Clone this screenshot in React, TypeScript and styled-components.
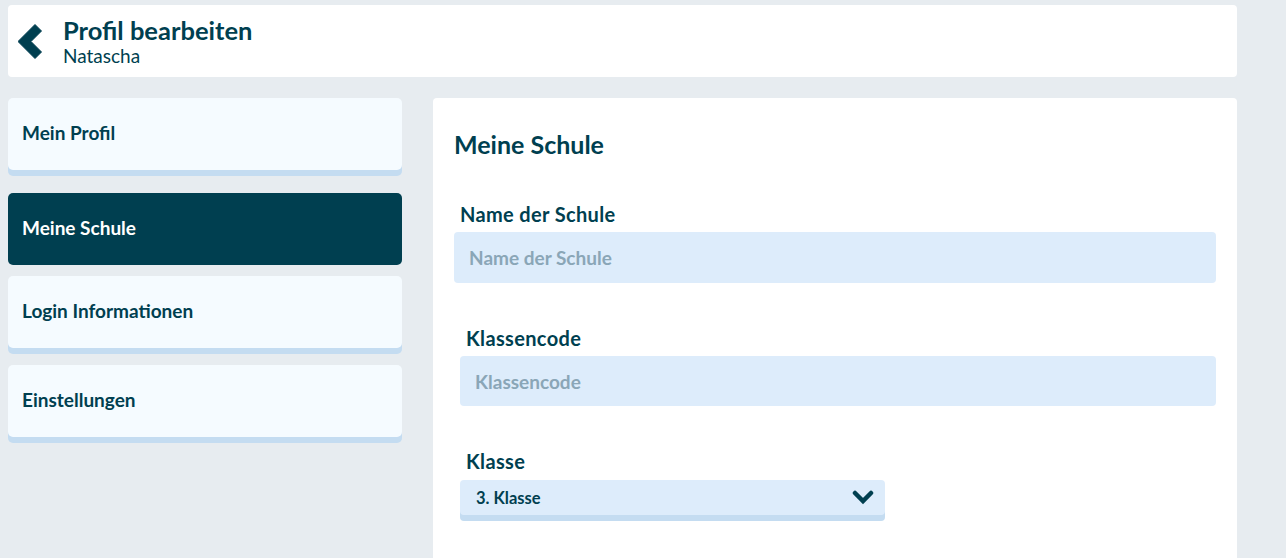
import styled, { createGlobalStyle } from "styled-components";

const GlobalStyle = createGlobalStyle`
  html, body {
    margin: 0;
    padding: 0;
    background: #e7ecf0;
    font-family: Lato, "Open Sans", sans-serif;
    color: #003f50;
  }
  * {
    box-sizing: border-box;
  }
`;

const Page = styled.div`
  width: 1229px;
  margin: 5px 0 0 8px;
  height: 553px;
  overflow: hidden;
`;

const Header = styled.header`
  height: 72px;
  background: #ffffff;
  border-radius: 4px;
  display: flex;
  align-items: center;
  padding-left: 10px;
`;

const BackButton = styled.button`
  border: 0;
  background: none;
  padding: 0;
  width: 45px;
  height: 40px;
  display: flex;
  align-items: center;
  cursor: pointer;
`;

const TitleBlock = styled.div`
  display: flex;
  flex-direction: column;
`;

const Title = styled.h1`
  margin: 0;
  font-size: 25.5px;
  line-height: 29px;
  font-weight: 700;
`;

const Subtitle = styled.div`
  font-size: 19px;
  line-height: 21px;
  font-weight: 400;
`;

const Body = styled.div`
  margin-top: 21px;
  display: grid;
  grid-template-columns: 394px 804px;
  column-gap: 31px;
  align-items: start;
`;

const Nav = styled.nav`
  display: flex;
  flex-direction: column;
  gap: 11px;
`;

const NavItem = styled.button<{ $active?: boolean }>`
  height: 72px;
  border: 0;
  border-radius: 5px;
  padding: 0 14px 4px;
  text-align: left;
  font-family: inherit;
  font-size: 19px;
  font-weight: 700;
  cursor: pointer;
  background: ${(p) => (p.$active ? "#003f50" : "#f5fbff")};
  color: ${(p) => (p.$active ? "#ffffff" : "#003f50")};
  box-shadow: ${(p) => (p.$active ? "none" : "0 6px 0 #c4dcf1")};
  margin-top: ${(p) => (p.$active ? "6px" : "0")};
  margin-bottom: ${(p) => (p.$active ? "0" : "6px")};
`;

const Panel = styled.section`
  background: #ffffff;
  border-radius: 4px;
  height: 470px;
  padding: 30px 21px 0 21px;
`;

const PanelTitle = styled.h2`
  margin: 0 0 42px;
  font-size: 25px;
  line-height: 32px;
  font-weight: 700;
`;

const Field = styled.div<{ $indent: number; $gap: number }>`
  display: flex;
  flex-direction: column;
  padding-left: ${(p) => p.$indent}px;
  margin-bottom: ${(p) => p.$gap}px;
`;

const Label = styled.label`
  font-size: 20px;
  line-height: 24px;
  font-weight: 700;
  letter-spacing: 0.35px;
  padding-left: 6px;
  margin-bottom: 6px;
`;

const Input = styled.input<{ $height: number }>`
  height: ${(p) => p.$height}px;
  border: 0;
  border-radius: 4px;
  background: #ddecfb;
  padding: 0 15px;
  font-family: inherit;
  font-size: 19px;
  font-weight: 700;
  color: #003f50;
  outline: none;
  &::placeholder {
    color: #8aa6b7;
  }
`;

const Select = styled.div`
  width: 425px;
  height: 35px;
  margin-top: 1px;
  border-radius: 4px;
  background: #ddecfb;
  box-shadow: 0 6px 0 #c4dcf1;
  display: flex;
  align-items: center;
  justify-content: space-between;
  padding: 0 11px 0 16px;
  font-size: 16.5px;
  font-weight: 700;
  cursor: pointer;
`;

function ChevronLeft() {
  return (
    <svg width="25" height="35" viewBox="0 0 25 35">
      <polygon
        points="0,17.5 17,0.5 23.5,7 13,17.5 23.5,28 17,34.5"
        fill="#003f50"
        stroke="#003f50"
        strokeWidth="1"
        strokeLinejoin="round"
      />
    </svg>
  );
}

function ChevronDown() {
  return (
    <svg width="22" height="15" viewBox="0 0 22 15">
      <polyline
        points="3,3 11,11 19,3"
        fill="none"
        stroke="#003f50"
        strokeWidth="4.5"
        strokeLinecap="round"
        strokeLinejoin="miter"
      />
    </svg>
  );
}

const navItems = ["Mein Profil", "Meine Schule", "Login Informationen", "Einstellungen"];

export default function App() {
  return (
    <>
      <GlobalStyle />
      <Page>
        <Header>
          <BackButton aria-label="Zurück">
            <ChevronLeft />
          </BackButton>
          <TitleBlock>
            <Title>Profil bearbeiten</Title>
            <Subtitle>Natascha</Subtitle>
          </TitleBlock>
        </Header>
        <Body>
          <Nav>
            {navItems.map((item) => (
              <NavItem key={item} $active={item === "Meine Schule"}>
                {item}
              </NavItem>
            ))}
          </Nav>
          <Panel>
            <PanelTitle>Meine Schule</PanelTitle>
            <Field $indent={0} $gap={43}>
              <Label>Name der Schule</Label>
              <Input $height={51} placeholder="Name der Schule" />
            </Field>
            <Field $indent={6} $gap={43}>
              <Label>Klassencode</Label>
              <Input $height={50} placeholder="Klassencode" />
            </Field>
            <Field $indent={6} $gap={0}>
              <Label>Klasse</Label>
              <Select>
                <span>3. Klasse</span>
                <ChevronDown />
              </Select>
            </Field>
          </Panel>
        </Body>
      </Page>
    </>
  );
}
